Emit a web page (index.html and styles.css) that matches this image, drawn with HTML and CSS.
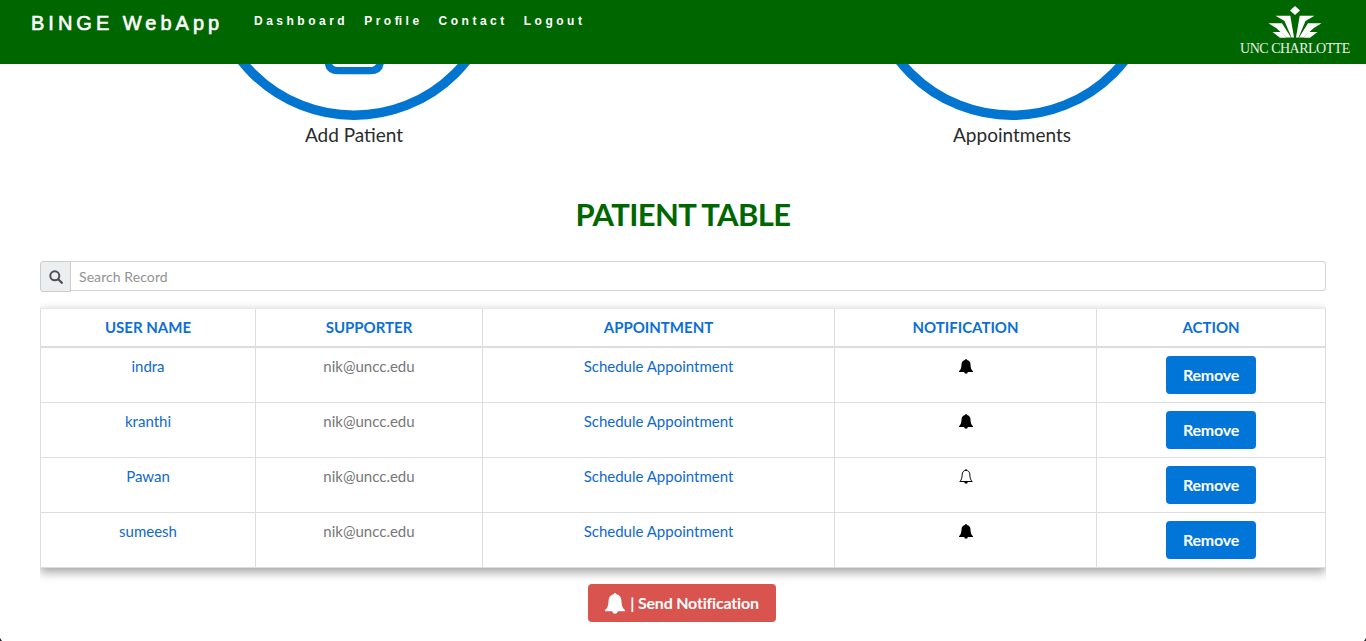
FILE: index.html
```html
<!DOCTYPE html>
<html lang="en">
<head>
<meta charset="utf-8">
<title>BINGE WebApp</title>
<link rel="stylesheet" href="styles.css">
</head>
<body>
<svg class="defs" aria-hidden="true">
  <symbol id="bell" viewBox="0.4 0.3 19.2 21.5" preserveAspectRatio="none"><path d="M10 .3c.8 0 1.300.6 1.300 1.300 3 .6 4.600 2.800 4.800 5.900.2 5.200 1 8.300 3.500 10.300v1.300H12.500a2.500 2.500 0 0 1-5 0H.4v-1.300c2.500-2 3.300-5.100 3.500-10.300.2-3.100 1.800-5.300 4.800-5.900C8.700.9 9.200.3 10 .3z"/></symbol>
</svg>
<header class="navbar">
  <a class="brand">BINGE WebApp</a>
  <nav class="links"><a>Dashboard</a><a>Pro<span class="tight">fi</span>le</a><a>Contact</a><a>Logout</a></nav>
  <div class="logo">
    <svg class="crown" viewBox="0 0 54 34" width="54" height="34" fill="#fff">
      <path d="M27 0l5 4.500-5 4.500-5-4.500z"/>
      <path d="M7.500 9.700H22.300L26 31.500h-2.500L16.500 15z"/>
      <path d="M46.500 9.700H31.700L28 31.500h2.500L37.500 15z"/>
      <path d="M.5 17.200h13.500L23 31.500h-4.500L8.500 22.300z"/>
      <path d="M53.500 17.200H40L31 31.500h4.500L45.500 22.300z"/>
      <path d="M4.500 26h8.500l5.500 5.800h-6.500z"/>
      <path d="M49.500 26h-8.500l-5.500 5.800h6.500z"/>
    </svg>
    <span class="logo-text">UNC CHARLOTTE</span>
  </div>
</header>
<main>
  <section class="tiles">
    <a class="tile">
      <svg width="296" height="56" viewBox="0 0 296 56" fill="none" stroke="#0275d0"><circle cx="148" cy="-92" r="143.300" stroke-width="9.400"/><path d="M122-8v4q0 10.700 10.500 10.700h31.500q10.500 0 10.500-10.700v-4" stroke-width="7.200"/></svg>
      <span>Add Patient</span>
    </a>
    <a class="tile">
      <svg width="296" height="56" viewBox="0 0 296 56" fill="none" stroke="#0275d0"><circle cx="148" cy="-92" r="143.300" stroke-width="9.400"/></svg>
      <span>Appointments</span>
    </a>
  </section>
  <h2 class="title">PATIENT TABLE</h2>
  <div class="search">
    <span class="addon"><svg width="14" height="14" viewBox="0 0 14 14" fill="none" stroke="#4d5256"><circle cx="5.800" cy="5.800" r="4.500" stroke-width="2"/><path d="M9.200 9.200l3.600 3.600" stroke-width="2.300" stroke-linecap="round"/></svg></span>
    <input class="field" type="text" placeholder="Search Record">
  </div>
  <div class="table-wrap">
    <table class="patients">
      <colgroup><col class="c1"><col class="c2"><col class="c3"><col class="c4"><col class="c5"></colgroup>
      <thead><tr><th>USER NAME</th><th>SUPPORTER</th><th>APPOINTMENT</th><th>NOTIFICATION</th><th>ACTION</th></tr></thead>
      <tbody>
        <tr><td><a>indra</a></td><td>nik@uncc.edu</td><td><a>Schedule Appointment</a></td><td><svg class="bell"><use href="#bell"/></svg></td><td><button class="btn remove">Remove</button></td></tr>
        <tr><td><a>kranthi</a></td><td>nik@uncc.edu</td><td><a>Schedule Appointment</a></td><td><svg class="bell"><use href="#bell"/></svg></td><td><button class="btn remove">Remove</button></td></tr>
        <tr><td><a>Pawan</a></td><td>nik@uncc.edu</td><td><a>Schedule Appointment</a></td><td><svg class="bell" viewBox="0 0 14 15"><path d="M7 1.300C4.600 1.500 3.300 3.200 3.200 5.300 3.100 8.800 2.500 11 .8 12.500h12.400C11.500 11 10.900 8.800 10.800 5.300 10.700 3.200 9.400 1.500 7 1.300z" fill="none" stroke="#000"/><path d="M5.200 12.800h3.600a1.800 1.900 0 0 1-3.600 0zM6.300.2h1.400v1.400H6.300z"/></svg></td><td><button class="btn remove">Remove</button></td></tr>
        <tr><td><a>sumeesh</a></td><td>nik@uncc.edu</td><td><a>Schedule Appointment</a></td><td><svg class="bell"><use href="#bell"/></svg></td><td><button class="btn remove">Remove</button></td></tr>
      </tbody>
    </table>
  </div>
  <div class="actions"><button class="btn send"><svg class="bell-lg"><use href="#bell"/></svg><span>| Send Notification</span></button></div>
</main>
<i class="corner left"></i><i class="corner right"></i>
</body>
</html>
```

FILE: styles.css
```css
* { box-sizing: border-box; }
html, body { height: 100%; }
body { margin: 0; overflow: hidden; background: #fff; color: #292b2c; font: 15px/20px Lato, sans-serif; }
.defs { display: none; }
.navbar { display: flex; height: 64px; padding: 0 15px 0 31px; background: #060; color: #fff; font-family: "Liberation Sans", sans-serif; }
.brand { width: 223px; padding-top: 10px; font-size: 20px; line-height: 26px; letter-spacing: 4px; -webkit-text-stroke: .6px #fff; white-space: nowrap; }
.links { display: flex; gap: 16px; padding-top: 11px; font-size: 12px; line-height: 20px; font-weight: bold; letter-spacing: 3.5px; }
.tight { margin-right: 3.5px; letter-spacing: 0; }
.logo { display: flex; flex-direction: column; align-items: center; width: 112px; margin-left: auto; padding-top: 6px; }
.crown { display: block; }
.logo-text { margin-top: 2px; color: #e8f0e8; font: 14px/14px "Liberation Serif", serif; letter-spacing: -.5px; white-space: nowrap; }
main { padding: 0 40px; }
.tiles { display: flex; justify-content: space-between; padding: 0 166px; height: 131px; }
.tile { display: flex; flex-direction: column; align-items: center; font-size: 19px; line-height: 30px; }
.tile svg { display: block; flex: none; }
.title { margin: 0; text-align: center; color: #060; font-size: 31px; font-weight: bold; line-height: 38px; letter-spacing: -.6px; }
.search { display: flex; height: 31px; margin-top: 28px; }
.addon { display: flex; align-items: center; justify-content: center; width: 31px; border: 1px solid #ccc; border-radius: 3px 0 0 3px; background: #eceeef; }
.field { flex: 1; height: 30px; padding: 0 8px; border: 1px solid #d3d3d3; border-left: 0; border-radius: 0 3px 3px 0; font: 14px Lato, sans-serif; letter-spacing: .08px; }
.field::placeholder { color: #929292; opacity: 1; }
.table-wrap { padding: 16px 0; overflow: hidden; }
.patients { table-layout: fixed; width: 1286px; border-spacing: 0; border-top: 1px solid #e8e8e8; border-left: 1px solid #ddd; background: #fff; box-shadow: 0 4px 10px rgba(0,0,0,.38); text-align: center; color: #777; }
.c1 { width: 215px; } .c2 { width: 227px; } .c3 { width: 352px; } .c4 { width: 262px; } .c5 { width: 229px; }
.patients th { height: 39px; padding: 0 0 2px; border-right: 1px solid #ddd; border-bottom: 2px solid #ddd; color: #0d6fd6; font-size: 15px; }
.patients td { height: 55px; padding: 8px 0; border-right: 1px solid #ddd; border-bottom: 1px solid #ddd; vertical-align: top; }
.patients a { color: #0f69cf; }
.bell { display: block; width: 14px; height: 15px; margin: 3px auto 0; }
.btn { display: flex; align-items: center; justify-content: center; height: 38px; margin: 0 auto; padding: 0; border: 0; border-radius: 4px; color: #fff; font: bold 16px/20px Lato, sans-serif; letter-spacing: -.2px; }
.remove { width: 90px; background: #0275d8; }
.actions { padding-right: 2px; }
.send { width: 188px; gap: 5px; background: #d9534f; }
.bell-lg { width: 20px; height: 21px; fill: #fff; }
.corner { position: fixed; bottom: 0; width: 2px; height: 3px; background: #223; }
.left { left: 0; clip-path: polygon(0 0, 100% 100%, 0 100%); }
.right { right: 0; clip-path: polygon(100% 0, 100% 100%, 0 100%); }
```
